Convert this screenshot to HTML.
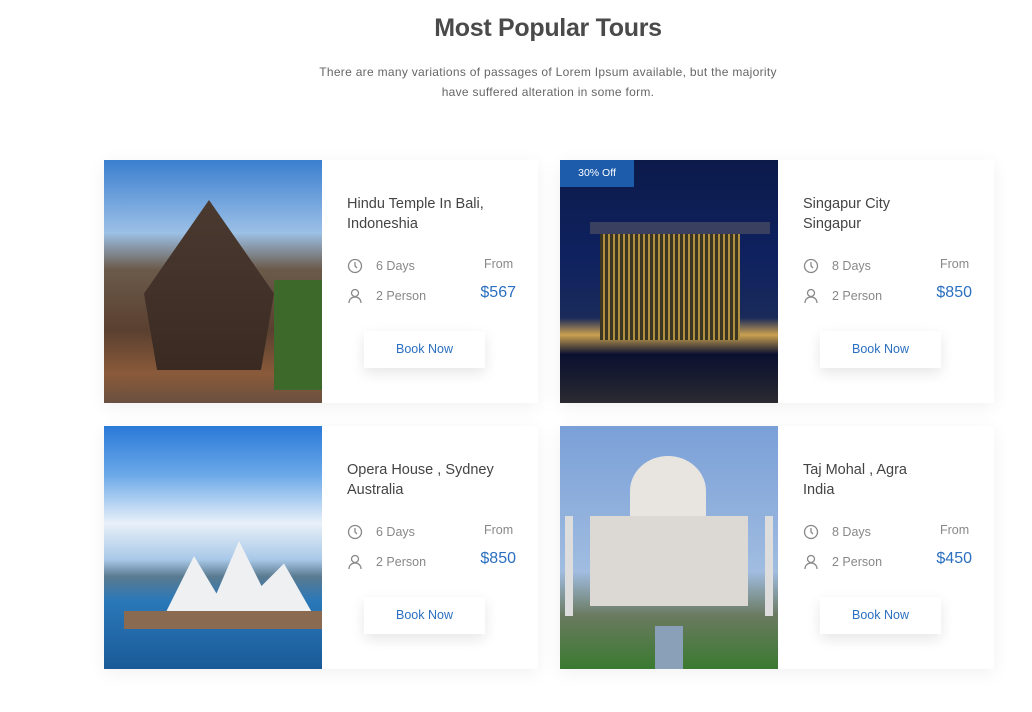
<!DOCTYPE html>
<html><head><style>
*{margin:0;padding:0;box-sizing:border-box}
body{width:1032px;height:712px;background:#fff;font-family:"Liberation Sans",sans-serif;position:relative;overflow:hidden}
h1{position:absolute;top:14px;left:0;width:1096px;text-align:center;font-size:25px;color:#4a4a4a;font-weight:bold;letter-spacing:-0.3px}
.sub{position:absolute;top:62px;left:312px;width:472px;text-align:center;font-size:12px;line-height:20px;color:#666;letter-spacing:0.3px}
.card{position:absolute;width:434px;height:243px;background:#fff;box-shadow:0 4px 18px rgba(0,0,0,0.06)}
.img{position:absolute;left:0;top:0;width:218px;height:243px;overflow:hidden}
.t{position:absolute;left:243px;top:34px;font-size:14.5px;line-height:20px;color:#444}
.r{position:absolute;left:243px;font-size:12.5px;color:#888}
.r svg{position:absolute;left:0;top:-1px}
.r span{position:absolute;left:29px;white-space:nowrap}
.from{position:absolute;left:380px;top:97px;font-size:12.5px;color:#888}
.price{position:absolute;right:22px;top:124px;font-size:16px;color:#2a6fc0}
.btn{position:absolute;left:260px;top:171px;width:121px;height:37px;background:#fff;box-shadow:0 5px 14px rgba(0,0,0,0.1);text-align:center;line-height:37px;font-size:12.5px;color:#2a6fc0}
.badge{position:absolute;left:0;top:0;width:74px;height:27px;background:#1d5bab;color:#fff;font-size:10.5px;text-align:center;line-height:27px}
</style></head><body>
<h1>Most Popular Tours</h1>
<div class="sub">There are many variations of passages of Lorem Ipsum available, but the majority<br>have suffered alteration in some form.</div>

<div class="card" style="left:104px;top:160px">
 <div class="img" style="background:linear-gradient(#3b7fd0 0%,#9cc0e6 30%,#6b5a4a 45%,#5a4030 70%,#8a5a3a 88%,#6a5040 100%)">
  <div style="position:absolute;left:40px;top:40px;width:130px;height:170px;background:linear-gradient(#4a3a30,#3a2a22);clip-path:polygon(50% 0,100% 55%,90% 100%,10% 100%,0 55%)"></div>
  <div style="position:absolute;left:170px;top:120px;width:48px;height:110px;background:#3d6a2a"></div>
 </div>
 <div class="t">Hindu Temple In Bali,<br>Indoneshia</div>
 <div class="r" style="top:99px"><svg width="16" height="16" viewBox="0 0 16 16" fill="none" stroke="#888" stroke-width="1.3"><circle cx="8" cy="8" r="6.5"/><path d="M8 4v4l2 2"/></svg><span>6 Days</span></div>
 <div class="r" style="top:129px"><svg width="16" height="16" viewBox="0 0 16 16" fill="none" stroke="#888" stroke-width="1.3"><circle cx="8" cy="5" r="3.5"/><path d="M2 15c0-4 3-6 6-6s6 2 6 6"/></svg><span>2 Person</span></div>
 <div class="from">From</div><div class="price">$567</div>
 <div class="btn">Book Now</div>
</div>

<div class="card" style="left:560px;top:160px">
 <div class="img" style="background:linear-gradient(#0c1a4a 0%,#0f2260 40%,#1a2a5a 65%,#c9a050 72%,#0a1030 80%,#2a2a30 100%)">
  <div style="position:absolute;left:40px;top:70px;width:140px;height:110px;background:repeating-linear-gradient(90deg,#3a3520 0 3px,#b09040 3px 5px)"></div>
  <div style="position:absolute;left:30px;top:62px;width:180px;height:12px;background:#3a4060"></div>
  <div class="badge">30% Off</div>
 </div>
 <div class="t">Singapur City<br>Singapur</div>
 <div class="r" style="top:99px"><svg width="16" height="16" viewBox="0 0 16 16" fill="none" stroke="#888" stroke-width="1.3"><circle cx="8" cy="8" r="6.5"/><path d="M8 4v4l2 2"/></svg><span>8 Days</span></div>
 <div class="r" style="top:129px"><svg width="16" height="16" viewBox="0 0 16 16" fill="none" stroke="#888" stroke-width="1.3"><circle cx="8" cy="5" r="3.5"/><path d="M2 15c0-4 3-6 6-6s6 2 6 6"/></svg><span>2 Person</span></div>
 <div class="from">From</div><div class="price">$850</div>
 <div class="btn">Book Now</div>
</div>

<div class="card" style="left:104px;top:426px">
 <div class="img" style="background:linear-gradient(#2a7ad8 0%,#6aa8e8 20%,#e8f0f8 40%,#a8c8e8 55%,#5a7a90 62%,#2a78b8 72%,#1a5a98 100%)">
  <div style="position:absolute;left:60px;top:115px;width:150px;height:75px;background:#eef0f2;clip-path:polygon(0 100%,20% 20%,35% 70%,50% 0,65% 60%,80% 30%,100% 100%)"></div>
  <div style="position:absolute;left:20px;top:185px;width:198px;height:18px;background:#8a6a50"></div>
 </div>
 <div class="t">Opera House , Sydney<br>Australia</div>
 <div class="r" style="top:99px"><svg width="16" height="16" viewBox="0 0 16 16" fill="none" stroke="#888" stroke-width="1.3"><circle cx="8" cy="8" r="6.5"/><path d="M8 4v4l2 2"/></svg><span>6 Days</span></div>
 <div class="r" style="top:129px"><svg width="16" height="16" viewBox="0 0 16 16" fill="none" stroke="#888" stroke-width="1.3"><circle cx="8" cy="5" r="3.5"/><path d="M2 15c0-4 3-6 6-6s6 2 6 6"/></svg><span>2 Person</span></div>
 <div class="from">From</div><div class="price">$850</div>
 <div class="btn">Book Now</div>
</div>

<div class="card" style="left:560px;top:426px">
 <div class="img" style="background:linear-gradient(#7aa0d8 0%,#a0bce0 60%,#6a7a60 78%,#3a7a30 100%)">
  <div style="position:absolute;left:70px;top:30px;width:76px;height:70px;background:#e8e4e0;border-radius:50% 50% 10% 10%"></div>
  <div style="position:absolute;left:30px;top:90px;width:158px;height:90px;background:#dcd8d4"></div>
  <div style="position:absolute;left:5px;top:90px;width:8px;height:100px;background:#ddd"></div>
  <div style="position:absolute;left:205px;top:90px;width:8px;height:100px;background:#ddd"></div>
  <div style="position:absolute;left:95px;top:200px;width:28px;height:43px;background:#8aa0b8"></div>
 </div>
 <div class="t">Taj Mohal , Agra<br>India</div>
 <div class="r" style="top:99px"><svg width="16" height="16" viewBox="0 0 16 16" fill="none" stroke="#888" stroke-width="1.3"><circle cx="8" cy="8" r="6.5"/><path d="M8 4v4l2 2"/></svg><span>8 Days</span></div>
 <div class="r" style="top:129px"><svg width="16" height="16" viewBox="0 0 16 16" fill="none" stroke="#888" stroke-width="1.3"><circle cx="8" cy="5" r="3.5"/><path d="M2 15c0-4 3-6 6-6s6 2 6 6"/></svg><span>2 Person</span></div>
 <div class="from">From</div><div class="price">$450</div>
 <div class="btn">Book Now</div>
</div>
</body></html>
